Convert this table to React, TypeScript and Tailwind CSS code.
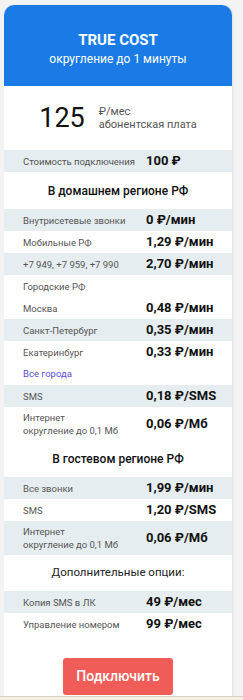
export default function App() {
  const Row = ({
    label,
    value,
    shaded,
    sub,
  }: {
    label: string;
    value?: string;
    shaded?: boolean;
    sub?: string;
  }) => (
    <div
      className={`flex items-center ${sub ? "h-[34px]" : "h-[22px]"} ${
        shaded ? "bg-[#e5edf0]" : "bg-white"
      }`}
    >
      <div className="w-[142px] shrink-0 pl-[19px] text-[9.5px] leading-[13px] text-[#555] whitespace-nowrap">
        {label}
        {sub && <div>{sub}</div>}
      </div>
      {value && (
        <div className="text-[13px] font-bold text-[#111] whitespace-nowrap">
          {value}
        </div>
      )}
    </div>
  );

  return (
    <div
      className="w-full h-[700px] overflow-hidden bg-[#f3f3f3] flex flex-col"
      style={{ fontFamily: "Roboto, 'Liberation Sans', sans-serif" }}
    >
      <div className="ml-[4px] mt-[5px] w-[228px] flex-1 bg-white rounded-t-[10px] shadow-[1px_0_2px_rgba(0,0,0,0.08)] flex flex-col">
        {/* Header */}
        <div className="h-[81px] shrink-0 bg-[#1a7be6] rounded-t-[10px] flex flex-col items-center justify-center pt-[6px] text-white">
          <div className="text-[15px] font-bold leading-[18px]">TRUE COST</div>
          <div className="text-[12px] leading-[16px] mt-[2px]">
            округление до 1 минуты
          </div>
        </div>

        {/* Monthly fee */}
        <div className="h-[64px] shrink-0 flex items-center justify-center">
          <div className="text-[27px] leading-none text-[#111]">125</div>
          <div className="ml-[14px] text-[11px] leading-[13px] text-[#555]">
            <div>₽/мес</div>
            <div>абонентская плата</div>
          </div>
        </div>

        <Row label="Стоимость подключения" value="100 ₽" shaded />

        <div className="h-[37px] shrink-0 flex items-center justify-center text-[12px] font-medium text-[#111]">
          В домашнем регионе РФ
        </div>
        <Row label="Внутрисетевые звонки" value="0 ₽/мин" shaded />
        <Row label="Мобильные РФ" value="1,29 ₽/мин" />
        <Row label="+7 949, +7 959, +7 990" value="2,70 ₽/мин" shaded />
        <Row label="Городские РФ" />
        <Row label="Москва" value="0,48 ₽/мин" />
        <Row label="Санкт-Петербург" value="0,35 ₽/мин" shaded />
        <Row label="Екатеринбург" value="0,33 ₽/мин" />
        <div className="h-[22px] shrink-0 flex items-center pl-[19px] text-[9.5px] text-[#5b4fd9]">
          Все города
        </div>
        <Row label="SMS" value="0,18 ₽/SMS" shaded />
        <Row label="Интернет" sub="округление до 0,1 Мб" value="0,06 ₽/Мб" />

        <div className="h-[36px] shrink-0 flex items-center justify-center text-[12px] font-medium text-[#111]">
          В гостевом регионе РФ
        </div>
        <Row label="Все звонки" value="1,99 ₽/мин" shaded />
        <Row label="SMS" value="1,20 ₽/SMS" />
        <Row
          label="Интернет"
          sub="округление до 0,1 Мб"
          value="0,06 ₽/Мб"
          shaded
        />

        <div className="h-[36px] shrink-0 flex items-center justify-center text-[11.5px] text-[#222]">
          Дополнительные опции:
        </div>
        <Row label="Копия SMS в ЛК" value="49 ₽/мес" shaded />
        <Row label="Управление номером" value="99 ₽/мес" />

        <div className="mt-auto flex justify-center pb-[1px]">
          <button className="w-[110px] h-[37px] rounded-[3px] bg-[#f05d58] text-white text-[14px] font-medium">
            Подключить
          </button>
        </div>
      </div>
      <div className="h-[4px] shrink-0 border-t border-[#d8d2c4] bg-[#f5efe2]" />
    </div>
  );
}
